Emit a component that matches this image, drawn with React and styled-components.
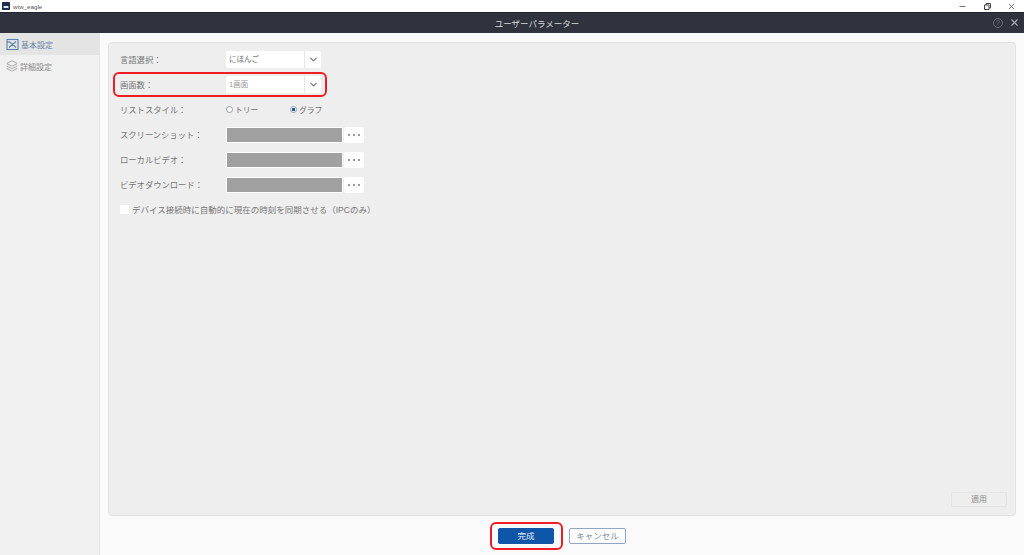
import React from 'react';
import styled, { createGlobalStyle } from 'styled-components';
import { ChevronDown, Layers, X, Minus } from 'lucide-react';

const GlobalStyle = createGlobalStyle`
  html, body {
    margin: 0;
    padding: 0;
    height: 100%;
    overflow: hidden;
    background: #fafafa;
    font-family: "Liberation Sans", "Noto Sans CJK JP", sans-serif;
  }
`;

const Window = styled.div`
  width: 1024px;
  height: 555px;
  display: flex;
  flex-direction: column;
  overflow: hidden;
  background: #fafafa;
`;

const TitleBar = styled.div`
  height: 12px;
  display: flex;
  align-items: center;
  padding-left: 2px;
  background: #fff;
`;

const AppIcon = styled.svg`
  width: 8px;
  height: 8px;
`;

const AppName = styled.span`
  margin-left: 3px;
  font-size: 6.2px;
  color: #555;
`;

const WinButtons = styled.div`
  margin-left: auto;
  margin-right: 8px;
  width: 58px;
  display: flex;
  align-items: center;
  justify-content: space-between;
`;

const Header = styled.div`
  position: relative;
  height: 21px;
  box-sizing: border-box;
  padding-left: 50px;
  display: flex;
  align-items: center;
  justify-content: center;
  border-top: 1px solid #22252c;
  background: #2f333d;
`;

const HeaderTitle = styled.div`
  font-size: 8.5px;
  color: #d8dadd;
`;

const HeaderIcons = styled.div`
  position: absolute;
  right: 4px;
  top: 4px;
  display: flex;
  align-items: center;
  gap: 6px;
`;

const HelpIcon = styled.div`
  width: 8px;
  height: 8px;
  border: 1px solid #696c74;
  border-radius: 50%;
  color: #787b82;
  font-size: 7px;
  line-height: 8px;
  text-align: center;
`;

const Body = styled.div`
  flex: 1;
  display: flex;
  min-height: 0;
`;

const Sidebar = styled.div`
  width: 99px;
  flex-shrink: 0;
  background: #f0f0f0;
  border-right: 1px solid #e6e6e6;
`;

const NavItem = styled.div`
  height: 22px;
  padding-left: 6px;
  display: flex;
  align-items: center;
  gap: 2px;
  font-size: 8px;
  color: ${p => (p.$active ? '#6d86a8' : '#8a8a8a')};
  background: ${p => (p.$active ? '#e4e4e4' : 'transparent')};
`;

const Main = styled.div`
  flex: 1;
  min-width: 0;
  display: flex;
  flex-direction: column;
  padding: 9px 8px 0;
`;

const Card = styled.div`
  height: 474px;
  box-sizing: border-box;
  display: flex;
  flex-direction: column;
  padding: 4px 8px 8px 11px;
  background: #eeeeee;
  border: 1px solid #e2e2e2;
  border-radius: 4px;
`;

const Form = styled.div`
  flex: 1;
  display: flex;
  flex-direction: column;
`;

const Row = styled.div`
  position: relative;
  height: 25px;
  display: flex;
  align-items: center;
`;

const Highlight = styled.div`
  position: absolute;
  left: ${p => p.$left}px;
  top: ${p => p.$top}px;
  width: ${p => p.$width}px;
  height: ${p => p.$height}px;
  box-sizing: border-box;
  border: 2px solid #ee1c25;
  border-radius: 6px;
  pointer-events: none;
`;

const Label = styled.div`
  width: 106px;
  flex-shrink: 0;
  padding-bottom: 2px;
  font-size: 8.3px;
  color: #757575;
  white-space: nowrap;
`;

const Select = styled.div`
  width: 95px;
  height: 17px;
  display: flex;
  background: #fff;
  border-radius: 2px;
`;

const SelectValue = styled.div`
  flex: 1;
  padding-left: 3px;
  font-size: 7.5px;
  line-height: 17px;
  color: ${p => (p.$muted ? '#9a9a9a' : '#707070')};
`;

const SelectArrow = styled.div`
  width: 16px;
  display: flex;
  align-items: center;
  justify-content: center;
  border-left: 1px solid #e6e6e6;
`;

const RadioGroup = styled.div`
  display: flex;
  padding-bottom: 1px;
`;

const Radio = styled.div`
  width: 64px;
  display: flex;
  align-items: center;
  gap: 2px;
  font-size: 7.8px;
  color: #707070;
`;

const RadioDot = styled.span`
  width: 5px;
  height: 5px;
  border: 1px solid #8d99a8;
  border-radius: 50%;
  background: ${p => (p.$checked ? 'radial-gradient(circle, #1957a6 0 1.6px, #fff 2px)' : '#fff')};
`;

const PathBox = styled.div`
  width: 117px;
  height: 16px;
  box-sizing: border-box;
  padding: 1px;
  background: #fff;
  border-radius: 2px;
`;

const PathFill = styled.div`
  height: 100%;
  background: #a0a0a0;
`;

const BrowseButton = styled.div`
  width: 20px;
  height: 16px;
  margin-left: 1px;
  display: flex;
  align-items: center;
  justify-content: center;
  gap: 2.6px;
  background: #fff;
  border-radius: 2px;
`;

const BrowseDot = styled.span`
  width: 2px;
  height: 2px;
  border-radius: 50%;
  background: #777;
`;

const CheckBox = styled.div`
  width: 9px;
  height: 9px;
  margin-right: 3px;
  background: #fff;
  border-radius: 1px;
`;

const CheckLabel = styled.div`
  padding-bottom: 2px;
  font-size: 8.5px;
  color: #757575;
  white-space: nowrap;
`;

const ApplyRow = styled.div`
  display: flex;
  justify-content: flex-end;
`;

const ApplyButton = styled.div`
  width: 56px;
  height: 15px;
  box-sizing: border-box;
  border: 1px solid #e4e4e4;
  border-radius: 2px;
  font-size: 8px;
  line-height: 13px;
  text-align: center;
  color: #8a8a8a;
`;

const Footer = styled.div`
  display: flex;
  justify-content: center;
  gap: 15px;
  padding-top: 12px;
`;

const PrimaryWrap = styled.div`
  position: relative;
`;

const PrimaryButton = styled.div`
  width: 56px;
  height: 16px;
  border-radius: 2px;
  background: #0f55a8;
  color: #e6edf6;
  font-size: 8.5px;
  line-height: 16px;
  text-align: center;
`;

const CancelButton = styled.div`
  width: 57px;
  height: 16px;
  box-sizing: border-box;
  border: 1px solid #8fa5c6;
  border-radius: 2px;
  background: #fff;
  color: #7d8ea6;
  font-size: 8.5px;
  line-height: 14px;
  text-align: center;
`;

const pathRows = ['スクリーンショット：', 'ローカルビデオ：', 'ビデオダウンロード：'];

function SelectBox({ value, muted }) {
  return (
    <Select>
      <SelectValue $muted={muted}>{value}</SelectValue>
      <SelectArrow>
        <ChevronDown size={11} color="#777" strokeWidth={2.5} />
      </SelectArrow>
    </Select>
  );
}

export default function App() {
  return (
    <Window>
      <GlobalStyle />
      <TitleBar>
        <AppIcon viewBox="0 0 10 10">
          <rect width="10" height="10" rx="1" fill="#1d2c4a" />
          <path d="M2 5h6v2.5H2z" fill="#dfe7f3" />
        </AppIcon>
        <AppName>wtw_eagle</AppName>
        <WinButtons>
          <Minus size={9} color="#444" />
          <svg width="9" height="9" viewBox="0 0 9 9" fill="none" stroke="#444">
            <path d="M1.5 3h4.5v4.5h-4.5zM3 3V1.5h4.5V6H6" />
          </svg>
          <X size={9} color="#444" />
        </WinButtons>
      </TitleBar>

      <Header>
        <HeaderTitle>ユーザーパラメーター</HeaderTitle>
        <HeaderIcons>
          <HelpIcon>?</HelpIcon>
          <X size={11} color="#a9acb2" strokeWidth={2.5} />
        </HeaderIcons>
      </Header>

      <Body>
        <Sidebar>
          <NavItem $active>
            <svg width="13" height="13" viewBox="0 0 13 13" fill="none" stroke="#5b80ad" strokeWidth="1.1">
              <rect x="1" y="1.5" width="11" height="10" />
              <path d="M3 3.5l7 6M10 3.5l-7 6M1 4h3" />
            </svg>
            基本設定
          </NavItem>
          <NavItem>
            <Layers size={12} color="#8a8a8a" strokeWidth={1.4} />
            詳細設定
          </NavItem>
        </Sidebar>

        <Main>
          <Card>
            <Form>
              <Row>
                <Label>言語選択：</Label>
                <SelectBox value="にほんご" />
              </Row>

              <Row>
                <Highlight $left={-7} $top={0} $width={214} $height={25} />
                <Label>画面数：</Label>
                <SelectBox value="1画面" muted />
              </Row>

              <Row>
                <Label>リストスタイル：</Label>
                <RadioGroup>
                  <Radio>
                    <RadioDot />
                    トリー
                  </Radio>
                  <Radio>
                    <RadioDot $checked />
                    グラフ
                  </Radio>
                </RadioGroup>
              </Row>

              {pathRows.map(label => (
                <Row key={label}>
                  <Label>{label}</Label>
                  <PathBox>
                    <PathFill />
                  </PathBox>
                  <BrowseButton>
                    <BrowseDot />
                    <BrowseDot />
                    <BrowseDot />
                  </BrowseButton>
                </Row>
              ))}

              <Row>
                <CheckBox />
                <CheckLabel>デバイス接続時に自動的に現在の時刻を同期させる（IPCのみ）</CheckLabel>
              </Row>
            </Form>

            <ApplyRow>
              <ApplyButton>適用</ApplyButton>
            </ApplyRow>
          </Card>

          <Footer>
            <PrimaryWrap>
              <Highlight $left={-8} $top={-6} $width={73} $height={28} />
              <PrimaryButton>完成</PrimaryButton>
            </PrimaryWrap>
            <CancelButton>キャンセル</CancelButton>
          </Footer>
        </Main>
      </Body>
    </Window>
  );
}
